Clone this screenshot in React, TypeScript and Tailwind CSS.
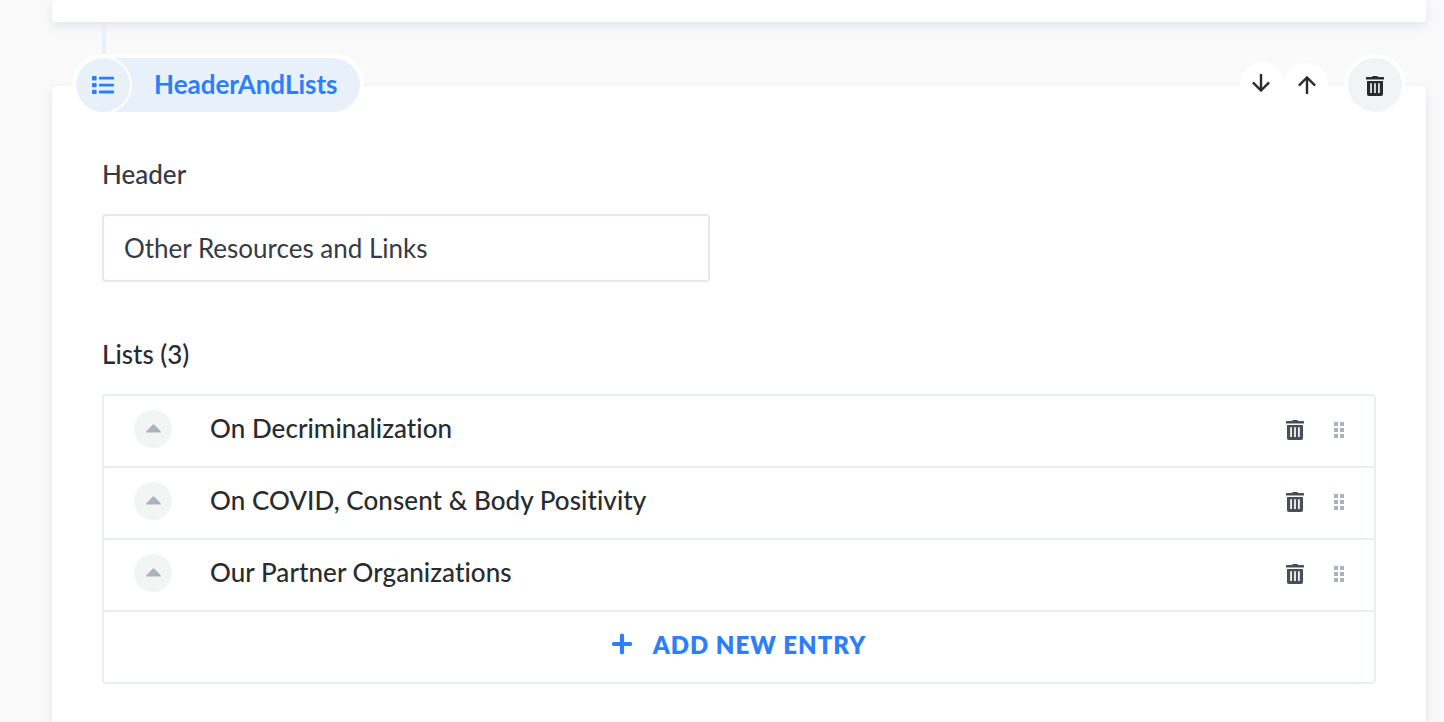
import React from "react";

const entries = [
  "On Decriminalization",
  "On COVID, Consent & Body Positivity",
  "Our Partner Organizations",
];

function TrashIcon({ className }: { className: string }) {
  return (
    <svg width="18" height="20" viewBox="0 0 18 20" fill="currentColor" className={className}>
      <path d="M6 1Q6.2 0 7 0H11Q11.8 0 12 1H17.2Q18 1 18 1.8V3.6H0V1.8Q0 1 .8 1Z" />
      <path
        fillRule="evenodd"
        d="M1 5H17V18.2Q17 20 15.2 20H2.8Q1 20 1 18.2ZM4.2 7.3V17H5.9V7.3ZM8.15 7.3V17H9.85V7.3ZM12.1 7.3V17H13.8V7.3Z"
      />
    </svg>
  );
}

function ArrowIcon({ up = false }: { up?: boolean }) {
  return (
    <svg width="18" height="18" viewBox="0 0 18 18" fill="none" stroke="currentColor" strokeWidth="2.4">
      {up ? <path d="M9 18V1.6M.9 9.6L9 1.5L17.1 9.6" /> : <path d="M9 0V16.4M.9 8.4L9 16.5L17.1 8.4" />}
    </svg>
  );
}

function ListIcon() {
  return (
    <svg width="22" height="18" viewBox="0 0 22 18" fill="currentColor">
      <rect x="0" y="0" width="4.6" height="4.4" rx="1" />
      <rect x="0" y="6.9" width="4.6" height="4.4" rx="1" />
      <rect x="0" y="13.8" width="4.6" height="4.4" rx="1" />
      <rect x="7" y="0.8" width="15" height="2.8" rx=".7" />
      <rect x="7" y="7.7" width="15" height="2.8" rx=".7" />
      <rect x="7" y="14.6" width="15" height="2.8" rx=".7" />
    </svg>
  );
}

function DragHandle() {
  return (
    <div className="-mt-[2px] grid grid-cols-2 gap-[2px]">
      {[0, 1, 2, 3, 4, 5].map((dot) => (
        <span key={dot} className="size-1 bg-[#aab2c0]" />
      ))}
    </div>
  );
}

function EntryRow({ title }: { title: string }) {
  return (
    <div className="flex h-[72px] items-center border-b-2 border-[#e9edf4] px-[30px]">
      <button className="-mt-1 flex size-[38px] items-center justify-center rounded-full bg-[#f3f5f5]">
        <svg width="15" height="9" viewBox="0 0 15 9" fill="#aab2c0" className="-mt-[2px]">
          <path d="M7.5 0L15 7.5V8.5H0V7.5Z" />
        </svg>
      </button>
      <span className="-mt-1.5 ml-[38px] flex-1 text-[26px] leading-8 font-medium tracking-[0.06px] text-[#292c2e] [font-variant-ligatures:common-ligatures]">
        {title}
      </span>
      <TrashIcon className="-mt-[2px] mr-[30px] text-[#4b4f59]" />
      <DragHandle />
    </div>
  );
}

export default function App() {
  return (
    <main className="flex h-[722px] flex-col overflow-hidden bg-[#fafafa] pr-[18px] pl-[52px] font-['Lato',sans-serif]">
      <div className="h-[22px] shrink-0 rounded-b bg-white shadow-[0_4px_12px_rgba(104,118,182,0.16)]" />
      <div className="mt-1 ml-[50px] h-7 w-1 shrink-0 bg-[#e6f1fa]" />
      <section className="mt-8 h-[660px] shrink-0 rounded-t bg-white shadow-[0_4px_12px_rgba(104,118,182,0.16)]">
        <header className="-mt-8 flex h-[62px] items-center justify-between px-5">
          <div className="flex h-[62px] w-[292px] items-center rounded-full bg-white p-1">
            <div className="flex h-[54px] w-full items-center overflow-hidden rounded-full bg-[#e8f0fa] text-[#2d7ff9]">
              <div className="flex size-[54px] shrink-0 items-center justify-center rounded-full shadow-[0_0_0_2px_#ffffff]">
                <ListIcon />
              </div>
              <span className="-mt-[2px] ml-6 text-[26px] leading-8 font-bold">HeaderAndLists</span>
            </div>
          </div>
          <div className="flex items-center text-[#292c2e]">
            <button className="-mt-[2px] flex size-11 items-center justify-center rounded-full bg-white pr-[2px] pb-[2px]">
              <ArrowIcon />
            </button>
            <button className="-mt-px flex size-11 items-center justify-center rounded-full bg-white pl-px">
              <ArrowIcon up />
            </button>
            <button className="ml-4 flex size-[62px] items-center justify-center rounded-full border-4 border-white bg-[#f1f3f5]">
              <TrashIcon className="mt-[2px] text-[#292c2e]" />
            </button>
          </div>
        </header>
        <div className="px-[50px] pt-[42px]">
          <label htmlFor="header-field" className="block text-[26px] leading-8 font-medium text-[#353a45]">
            Header
          </label>
          <input
            id="header-field"
            defaultValue="Other Resources and Links"
            className="mt-6 block h-[68px] w-[608px] rounded-[4px] border-2 border-[#e4e8f2] bg-white px-5 text-[26px] leading-8 text-[#353a45] outline-none"
          />
          <h2 className="mt-14 text-[26px] leading-8 font-medium text-[#292c2e]">Lists (3)</h2>
          <div className="mt-6 h-[290px] rounded-[4px] border-2 border-[#e9edf4]">
            {entries.map((title) => (
              <EntryRow key={title} title={title} />
            ))}
            <button className="flex h-[70px] w-full items-center justify-center text-[#2d7ff9]">
              <svg
                width="20"
                height="22"
                viewBox="0 0 20 22"
                fill="none"
                stroke="currentColor"
                strokeWidth="4.2"
                strokeLinecap="round"
                className="-mt-1.5"
              >
                <path d="M10 2.5V19.5M2 11H18" />
              </svg>
              <span className="-mt-[5px] ml-[21px] text-[24px] leading-8 font-extrabold tracking-[1px]">
                ADD NEW ENTRY
              </span>
            </button>
          </div>
        </div>
      </section>
    </main>
  );
}
